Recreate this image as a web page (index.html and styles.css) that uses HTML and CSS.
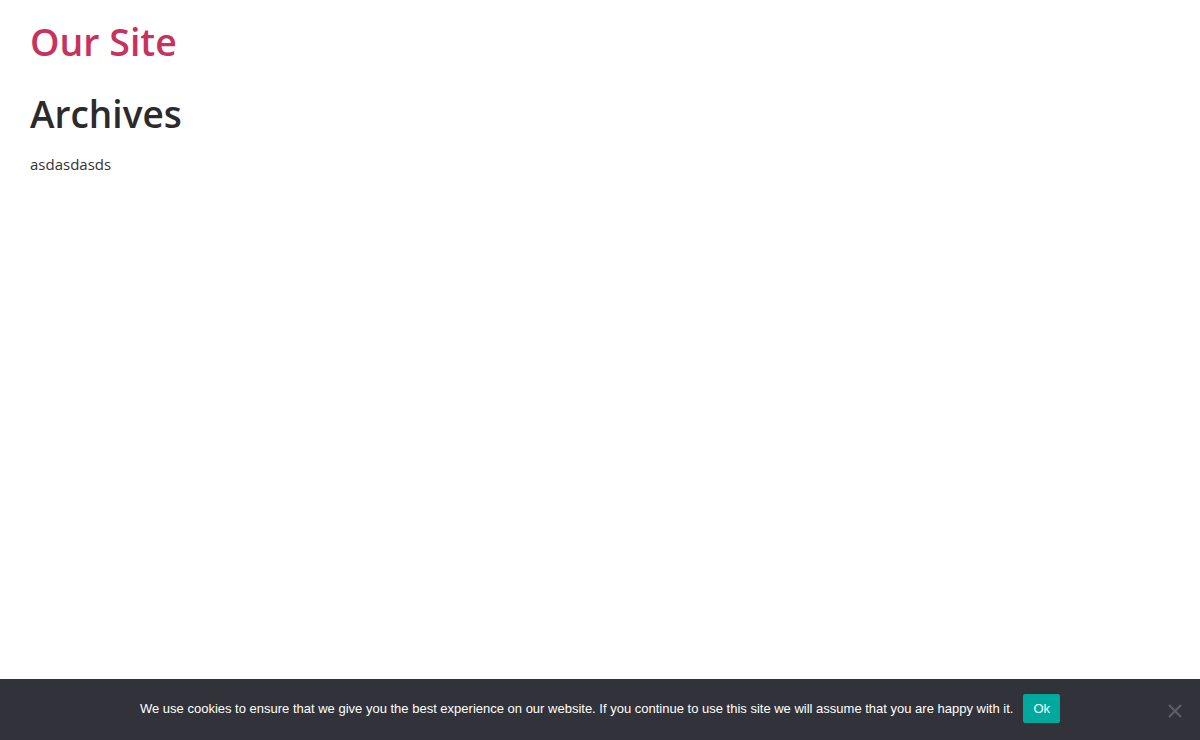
FILE: index.html
```html
<!DOCTYPE html>
<html lang="en">
<head>
<meta charset="utf-8">
<title>Archives - Our Site</title>
<link rel="stylesheet" href="styles.css">
</head>
<body>
<header class="site-header">
  <a class="site-title" href="#">Our Site</a>
</header>
<main class="content">
  <h1 class="page-title">Archives</h1>
  <p class="entry">asdasdasds</p>
</main>
<div class="cookie-notice">
  <span class="cookie-text">We use cookies to ensure that we give you the best experience on our website. If you continue to use this site we will assume that you are happy with it.</span>
  <a class="cookie-ok" href="#">Ok</a>
  <span class="cookie-close" aria-label="Close">
    <svg width="14" height="14" viewBox="0 0 14 14"><path d="M1 1L13 13M13 1L1 13" stroke="#5f6066" stroke-width="2" fill="none"/></svg>
  </span>
</div>
</body>
</html>
```
FILE: styles.css
```css
html, body {
  margin: 0;
  padding: 0;
}
body {
  font-family: "Open Sans", "Noto Sans", sans-serif;
  color: #333;
  background: #fff;
}
.site-header {
  padding: 16px 30px 0;
}
.site-title {
  display: inline-block;
  font-size: 37.5px;
  font-weight: 600;
  line-height: 52px;
  color: #c8325f;
  text-decoration: none;
}
.content {
  padding: 0 30px;
}
.page-title {
  margin: 22px 0 0;
  font-size: 37px;
  font-weight: 600;
  line-height: 48px;
  color: #2b2b2b;
}
.entry {
  margin: 16px 0 0;
  font-size: 15px;
  line-height: 20px;
  color: #333;
}
.cookie-notice {
  position: fixed;
  left: 0;
  right: 0;
  bottom: 0;
  height: 61px;
  background: #32333a;
  display: flex;
  align-items: center;
  justify-content: center;
  font-family: "Liberation Sans", Arial, sans-serif;
  font-size: 13px;
  color: #fff;
}
.cookie-text {
  line-height: 20px;
  margin-top: -2px;
}
.cookie-ok {
  margin-left: 10px;
  background: #00a99d;
  color: #fff;
  text-decoration: none;
  font-size: 13px;
  padding: 0 10px;
  height: 29px;
  line-height: 29px;
  border-radius: 2px;
  margin-top: -2px;
}
.cookie-close {
  position: absolute;
  right: 18px;
  top: 25px;
  display: block;
  width: 14px;
  height: 14px;
  line-height: 0;
}
```
